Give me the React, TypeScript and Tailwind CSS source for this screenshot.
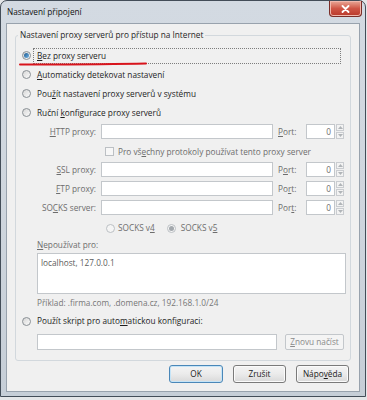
import React from 'react';

function Radio({ checked = false, disabled = false }: { checked?: boolean; disabled?: boolean }) {
  return (
    <span
      className={`flex h-[9px] w-[9px] shrink-0 items-center justify-center rounded-full border ${
        disabled ? 'border-[#bcc0c4] bg-[#f5f5f5]' : 'border-[#8a9095] bg-gradient-to-br from-[#d6d6d6] to-[#fbfbfb]'
      }`}
    >
      {checked && (
        <span
          className={`h-[5px] w-[5px] rounded-full ${
            disabled ? 'bg-[#a3a8ad]' : 'bg-gradient-to-br from-[#1b5a8e] to-[#74b6e8]'
          }`}
        />
      )}
    </span>
  );
}

function Spinner() {
  return (
    <div className="ml-[1px] flex w-[8px] flex-col gap-[1px]">
      <div className="flex h-[7px] items-center justify-center border border-[#c9ccd0] bg-[#f3f3f3]">
        <svg width="5" height="3" viewBox="0 0 5 3">
          <path d="M0 3 L2.5 0 L5 3 Z" fill="#b0b4b8" />
        </svg>
      </div>
      <div className="flex h-[7px] items-center justify-center border border-[#c9ccd0] bg-[#f3f3f3]">
        <svg width="5" height="3" viewBox="0 0 5 3">
          <path d="M0 0 L2.5 3 L5 0 Z" fill="#b0b4b8" />
        </svg>
      </div>
    </div>
  );
}

function ProxyRow({ label, port }: { label: React.ReactNode; port: React.ReactNode }) {
  return (
    <div className="flex h-[19px] items-center">
      <div className="w-[80px] text-right text-[#6d6d6d]">{label}</div>
      <div className="ml-[5px] h-[15px] w-[172px] border border-[#c3c7cb] bg-white" />
      <div className="ml-[5px] w-[28px] text-[#6d6d6d]">{port}</div>
      <div className="flex h-[15px]">
        <div className="flex w-[29px] items-center justify-end border border-[#c3c7cb] bg-white pr-[3px] text-[#6d6d6d]">
          0
        </div>
        <Spinner />
      </div>
    </div>
  );
}

function Button({ children, primary = false }: { children: React.ReactNode; primary?: boolean }) {
  return (
    <div
      className={`flex h-[18px] items-center justify-center rounded-[3px] border bg-gradient-to-b from-[#f4f4f4] via-[#ebebeb] to-[#d9d9d9] text-[#1a1a1a] ${
        primary ? 'w-[54px] border-[#4a87b8] shadow-[inset_0_0_0_1px_#c5e4f7]' : 'w-[53px] border-[#7a7a7a] shadow-[inset_0_0_0_1px_#fbfbfb]'
      }`}
    >
      {children}
    </div>
  );
}

const U = ({ children }: { children: React.ReactNode }) => <span className="underline underline-offset-[1px]">{children}</span>;

export default function App() {
  return (
    <div className="relative h-[400px] w-[367px] overflow-hidden bg-[#e4e6e8] font-['Open_Sans',sans-serif] text-[8.25px] leading-[12px] text-[#1e1e1e]">
      <div className="flex h-[397px] w-[366px] flex-col rounded-t-[7px] border border-[#434d58] bg-gradient-to-b from-[#d3dae2] via-[#cfd6de] to-[#c6ced7]">
        {/* title bar */}
        <div className="flex h-[22px] items-start justify-between pr-[3px]">
          <span className="pl-[6px] pt-[5px] text-[#111]">Nastavení připojení</span>
          <div className="flex h-[16px] w-[33px] items-center justify-center rounded-b-[4px] border border-t-0 border-[#7a2e28] bg-gradient-to-b from-[#e8a898] via-[#cf5646] to-[#b8382a] shadow-[inset_0_0_0_1px_#f0b8ad]">
            <svg width="9" height="8" viewBox="0 0 9 8">
              <path d="M1.5 1 L7.5 7 M7.5 1 L1.5 7" stroke="#fff" strokeWidth="1.8" strokeLinecap="round" />
            </svg>
          </div>
        </div>

        {/* client area */}
        <div className="mx-[5px] mb-[4px] flex flex-1 flex-col border border-[#98a2ad] bg-[#f0f0f0]">
          <fieldset className="mx-[8px] mt-[5px] rounded-[3px] border border-[#d2d8dd] pb-[10px] pt-[5px]">
            <legend className="ml-[2px] px-[2px] leading-[12px]">Nastavení proxy serverů pro přístup na Internet</legend>

            <div className="flex h-[19px] items-center pl-[6px] pr-[9px]">
              <Radio checked />
              <div className="ml-[2px] flex h-[16px] flex-1 items-center border border-dotted border-[#7d7d7d] pl-[3px]">
                <span>
                  <U>B</U>ez proxy serveru
                </span>
              </div>
            </div>
            <div className="flex h-[19px] items-center pl-[6px]">
              <Radio />
              <span className="ml-[6px]">
                <U>A</U>utomaticky detekovat nastavení
              </span>
            </div>
            <div className="flex h-[19px] items-center pl-[6px]">
              <Radio />
              <span className="ml-[6px]">
                Pou<U>ž</U>ít nastavení proxy serverů v systému
              </span>
            </div>
            <div className="flex h-[19px] items-center pl-[6px]">
              <Radio />
              <span className="ml-[6px]">
                Ruční <U>k</U>onfigurace proxy serverů
              </span>
            </div>

            <ProxyRow
              label={
                <>
                  <U>H</U>TTP proxy:
                </>
              }
              port={
                <>
                  <U>P</U>ort:
                </>
              }
            />
            <div className="flex h-[19px] items-center pl-[89px] pt-[2px]">
              <span className="h-[9px] w-[9px] border border-[#bcc0c4] bg-[#f7f7f7]" />
              <span className="ml-[4px] text-[#6d6d6d]">
                Pro vš<U>e</U>chny protokoly používat tento proxy server
              </span>
            </div>
            <ProxyRow
              label={
                <>
                  <U>S</U>SL proxy:
                </>
              }
              port={
                <>
                  P<U>o</U>rt:
                </>
              }
            />
            <ProxyRow
              label={
                <>
                  <U>F</U>TP proxy:
                </>
              }
              port={
                <>
                  Po<U>r</U>t:
                </>
              }
            />
            <ProxyRow
              label={
                <>
                  SO<U>C</U>KS server:
                </>
              }
              port={
                <>
                  Por<U>t</U>:
                </>
              }
            />

            <div className="flex h-[22px] items-center pl-[90px] text-[#6d6d6d]">
              <Radio disabled />
              <span className="ml-[3px]">
                SOCKS v<U>4</U>
              </span>
              <span className="ml-[12px] flex">
                <Radio checked disabled />
              </span>
              <span className="ml-[5px]">
                SOCKS v<U>5</U>
              </span>
            </div>

            <div className="flex h-[12px] items-center pl-[21px] text-[#6d6d6d]">
              <span>
                <U>N</U>epoužívat pro:
              </span>
            </div>
            <div className="ml-[21px] mr-[4px] mt-[2px] h-[41px] border border-[#c3c7cb] bg-white pl-[3px] pt-[3px] text-[#5c5c5c]">
              localhost, 127.0.0.1
            </div>
            <div className="mt-[2px] flex h-[14px] items-center pl-[21px] text-[#777]">
              Příklad: .firma.com, .domena.cz, 192.168.1.0/24
            </div>

            <div className="flex h-[22px] items-center pl-[6px]">
              <Radio />
              <span className="ml-[6px]">
                Použít skript pro auto<U>m</U>atickou konfiguraci:
              </span>
            </div>
            <div className="mt-[2px] flex h-[16px] pl-[21px]">
              <div className="w-[240px] border border-[#c3c7cb] bg-white" />
              <div className="ml-[8px] flex w-[59px] items-center justify-center rounded-[2px] border border-[#c3c7cb] bg-[#f4f4f4] text-[#8a8a8a]">
                <span>
                  <U>Z</U>novu načíst
                </span>
              </div>
            </div>
          </fieldset>

          <div className="mt-[4px] flex justify-end gap-[10px] pr-[10px]">
            <Button primary>OK</Button>
            <Button>Zrušit</Button>
            <Button>
              <span>
                Nápo<U>v</U>ěda
              </span>
            </Button>
          </div>
        </div>
      </div>

      {/* red marker drawn over the screenshot */}
      <svg className="absolute left-[19px] top-[61px]" width="128" height="6" viewBox="0 0 128 6">
        <path d="M1 3.6 C40 3.4 90 3.2 127 2.4" stroke="#d8141c" strokeWidth="2" fill="none" strokeLinecap="round" />
      </svg>
    </div>
  );
}
